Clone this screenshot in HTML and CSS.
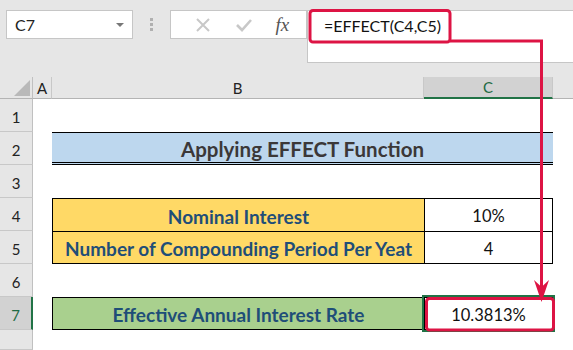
FILE: index.html
```
<!DOCTYPE html>
<html lang="en">
<head>
    <meta charset="UTF-8">
    <title>EFFECT Function</title>
    <link rel="stylesheet" href="styles.css">
</head>
<body>

    <!-- formula bar -->
    <div class="toolbar">
        <div class="name-box">
            <span>C7</span>
            <span class="caret"></span>
        </div>
        <div class="grip"><i></i><i></i><i></i></div>
        <div class="fx-box">
            <svg width="18" height="18" viewBox="0 0 18 18"><path d="M3 3 L15 15 M15 3 L3 15" stroke="#c8c8c8" stroke-width="2" fill="none"/></svg>
            <svg width="20" height="18" viewBox="0 0 20 18"><path d="M3 9 L8 14 L17 4" stroke="#c8c8c8" stroke-width="2.6" fill="none"/></svg>
            <span class="fx">fx</span>
        </div>
        <div class="formula">=EFFECT(C4,C5)</div>
    </div>

    <!-- worksheet -->
    <div class="sheet">
        <div class="corner"><svg width="33" height="22"><polygon points="30,3 30,19 14,19" fill="#b9b9b9"/></svg></div>
        <div class="col-head">A</div>
        <div class="col-head">B</div>
        <div class="col-head selected">C</div>
        <div class="col-head rest"></div>

        <div class="row-head">1</div>
        <div class="blank wide"></div>

        <div class="row-head">2</div>
        <div class="blank"></div>
        <div class="title">Applying EFFECT Function</div>
        <div class="blank"></div>

        <div class="row-head">3</div>
        <div class="blank wide"></div>

        <div class="row-head">4</div>
        <div class="blank"></div>
        <div class="label yellow">Nominal Interest</div>
        <div class="value">10%</div>
        <div class="blank"></div>

        <div class="row-head">5</div>
        <div class="blank"></div>
        <div class="label yellow last">Number of Compounding Period Per Yeat</div>
        <div class="value last">4</div>
        <div class="blank"></div>

        <div class="row-head">6</div>
        <div class="blank wide"></div>

        <div class="row-head selected">7</div>
        <div class="blank"></div>
        <div class="label green last">Effective Annual Interest Rate</div>
        <div class="value last active">10.3813%</div>
        <div class="blank"></div>

        <div class="row-head"></div>
        <div class="blank wide"></div>
    </div>

    <!-- callout drawn over the sheet -->
    <svg class="callout" width="573" height="350">
        <rect x="310" y="10.5" width="140" height="31.5" rx="3" fill="none" stroke="#dd1444" stroke-width="3"/>
        <path d="M450 41 H541.5 V288" fill="none" stroke="#dd1444" stroke-width="3"/>
        <polygon points="534,280 541.5,287 549,280 541.5,302" fill="#dd1444"/>
        <rect x="426.5" y="298.5" width="127" height="31.5" rx="3" fill="none" stroke="#dd1444" stroke-width="3"/>
    </svg>

</body>
</html>
```

FILE: styles.css
```
body {
    margin: 0;
    width: 573px;
    height: 350px;
    overflow: hidden;
    position: relative;
    background-color: #e6e6e6;
    font-family: Lato, "Open Sans", sans-serif;
    color: #222;
}
.toolbar {
    display: flex;
    align-items: flex-start;
    height: 77px;
    padding: 10px 0 0 6px;
    box-sizing: border-box;
}
.name-box {
    width: 127px;
    height: 29px;
    box-sizing: border-box;
    background-color: #fff;
    border: 1px solid #c6c6c6;
    display: flex;
    align-items: center;
    justify-content: space-between;
    padding: 0 8px 0 8px;
    font-size: 16px;
}
.caret {
    width: 0;
    height: 0;
    border-left: 4px solid transparent;
    border-right: 4px solid transparent;
    border-top: 4px solid #777;
}
.grip {
    width: 37px;
    height: 29px;
    display: flex;
    flex-direction: column;
    align-items: center;
    justify-content: center;
    gap: 2px;
}
.grip i {
    width: 3px;
    height: 3px;
    background-color: #b0b0b0;
}
.fx-box {
    width: 137px;
    height: 29px;
    box-sizing: border-box;
    background-color: #fff;
    border: 1px solid #c6c6c6;
    display: flex;
    align-items: center;
    justify-content: space-around;
    padding: 0 6px 0 12px;
}
.fx {
    font-family: "Liberation Serif", serif;
    font-style: italic;
    font-size: 19px;
    color: #555;
}
.formula {
    flex: 1;
    height: 53px;
    box-sizing: border-box;
    background-color: #fff;
    border: 1px solid #c6c6c6;
    border-right: none;
    padding: 5px 0 0 16px;
    font-size: 16px;
    color: #111;
}
.sheet {
    display: grid;
    grid-template-columns: 33px 19px 372px 129px 1fr;
    grid-template-rows: 22px repeat(7, 33px) 1fr;
    height: 273px;
    background-color: #fff;
}
.corner {
    background-color: #e6e6e6;
    border-right: 1px solid #c0c0c0;
    border-bottom: 1px solid #b4b4b4;
}
.col-head {
    background-color: #e6e6e6;
    border-right: 1px solid #c8c8c8;
    border-bottom: 1px solid #b4b4b4;
    display: flex;
    align-items: center;
    justify-content: center;
    font-size: 15px;
}
.col-head.selected {
    background-color: #d2d2d2;
    border-bottom: 2px solid #217346;
    color: #1e6b44;
}
.col-head.rest {
    border-right: none;
}
.row-head {
    background-color: #e6e6e6;
    border-right: 1px solid #c0c0c0;
    border-bottom: 1px solid #c8c8c8;
    display: flex;
    align-items: center;
    justify-content: center;
    padding-top: 4px;
    font-size: 15px;
}
.row-head.selected {
    background-color: #d2d2d2;
    border-right: 2px solid #217346;
    color: #1e6b44;
}
.wide {
    grid-column: 2 / 6;
}
.title {
    grid-column: 3 / 5;
    background-color: #bdd7ee;
    border-top: 1px solid #000;
    border-bottom: 3px double #000;
    display: flex;
    align-items: center;
    justify-content: center;
    padding-top: 2px;
    font-weight: bold;
    font-size: 20.5px;
    color: #3b3838;
}
.label {
    display: flex;
    align-items: center;
    justify-content: center;
    padding-top: 2px;
    border-top: 1px solid #000;
    border-left: 1px solid #000;
    font-weight: bold;
    font-size: 19px;
    color: #1f4e78;
}
.yellow {
    background-color: #ffd966;
}
.green {
    background-color: #a9d08e;
}
.value {
    display: flex;
    align-items: center;
    justify-content: center;
    padding-top: 2px;
    border-top: 1px solid #000;
    border-left: 1px solid #000;
    border-right: 1px solid #000;
    font-size: 16.5px;
    color: #111;
}
.last {
    border-bottom: 1px solid #000;
}
.value.active {
    outline: 2px solid #217346;
}
.callout {
    position: absolute;
    top: 0;
    left: 0;
    pointer-events: none;
}
```
